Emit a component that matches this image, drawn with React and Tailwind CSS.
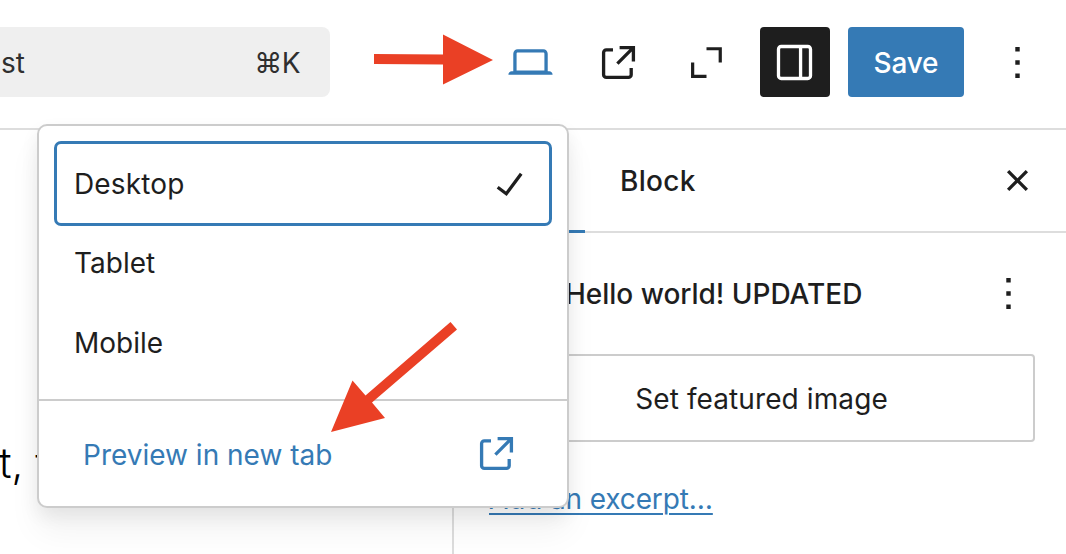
const Icon = ({ d, className = "" }) => (
  <svg viewBox="0 0 24 24" className={`w-[53px] h-[53px] shrink-0 ${className}`} fill="currentColor" fillRule="evenodd">
    <path d={d} />
  </svg>
);

const DESKTOP = "M20.5 16h-.7V8c0-1.1-.9-2-2-2H6.2c-1.1 0-2 .9-2 2v8h-.7c-.8 0-1.5.7-1.5 1.5h20c0-.8-.7-1.5-1.5-1.5zM5.7 8c0-.3.2-.5.5-.5h11.6c.3 0 .5.2.5.5v7.6H5.7V8z";
const EXTERNAL = "M19.5 4.5h-7V6h4.44l-5.97 5.97 1.06 1.06L18 7.06v4.44h1.5v-7Zm-13 1a2 2 0 0 0-2 2v10a2 2 0 0 0 2 2h10a2 2 0 0 0 2-2v-3H17v3a.5.5 0 0 1-.5.5h-10a.5.5 0 0 1-.5-.5v-10a.5.5 0 0 1 .5-.5h3V5.5h-3Z";
const EXPAND = "M12 5.1H18.95V12H17.5V6.5H12ZM5 12H6.45V17.6H12V19H5Z";
const DRAWER = "M18 4H6c-1.1 0-2 .9-2 2v12c0 1.1.9 2 2 2h12c1.1 0 2-.9 2-2V6c0-1.1-.9-2-2-2zm-4 14.5H6c-.3 0-.5-.2-.5-.5V6c0-.3.2-.5.5-.5h8v13zm4.5-.5c0 .3-.2.5-.5.5h-2.5v-13H18c.3 0 .5.2.5.5v12z";
const MORE = "M13 19h-2v-2h2v2zm0-6h-2v-2h2v2zm0-6h-2V5h2v2z";
const CHECK = "M16.7 7.1l-6.3 8.5-3.3-2.5-.9 1.2 4.5 3.4L17.9 8z";
const CLOSE = "M12 13.06l3.712 3.713 1.061-1.06L13.061 12l3.712-3.712-1.06-1.06L12 10.938 8.288 7.227l-1.061 1.06L10.939 12l-3.712 3.712 1.06 1.061L12 13.061z";

function Toolbar() {
  return (
    <header className="flex h-[130px] shrink-0 items-start border-b-2 border-[#dddddd] pt-[27px]">
      <div className="flex h-[70px] w-[330px] items-center justify-between rounded-r-lg bg-[#efefef] pt-[2px] pr-[30px] pl-[1px] text-[#2f2f2f]">
        <span>st</span>
        <span className="tracking-[-0.5px]">⌘K</span>
      </div>
      <div className="ml-[174px] flex h-[70px] items-center">
        <Icon d={DESKTOP} className="text-[#357ab5]" />
        <Icon d={EXTERNAL} className="ml-[35px]" />
        <Icon d={EXPAND} className="ml-[35px]" />
      </div>
      <button className="ml-[27px] flex h-[70px] w-[70px] items-center justify-center rounded-[4px] bg-[#1e1e1e] pr-[2px] text-white">
        <Icon d={DRAWER} />
      </button>
      <button className="ml-[18px] h-[70px] w-[116px] rounded-[4px] bg-[#357ab5] pt-[2px] font-medium tracking-[-0.2px] text-white">Save</button>
      <div className="ml-[27px] flex h-[70px] items-center">
        <Icon d={MORE} />
      </div>
    </header>
  );
}

function Sidebar() {
  return (
    <aside className="flex w-[614px] shrink-0 flex-col border-l-2 border-[#dddddd]">
      <div className="flex h-[103px] shrink-0 items-stretch border-b-2 border-[#dddddd] font-medium">
        <div className="-mb-[2px] w-[131px] border-b-[3px] border-[#357ab5]" />
        <div className="flex flex-1 items-center pl-[35px] tracking-[0.3px]">Block</div>
        <div className="mr-[22px] flex items-center">
          <Icon d={CLOSE} />
        </div>
      </div>
      <div className="mt-[34px] flex h-[53px] items-center justify-between pr-[31px] pl-[111px] font-medium">
        <span className="tracking-[-0.02px]">Hello world! UPDATED</span>
        <Icon d={MORE} />
      </div>
      <button className="mt-[34px] mr-[31px] ml-[34px] h-[88px] shrink-0 rounded-[4px] border-2 border-[#cccccc] pt-[2px] tracking-[0.1px]">
        Set featured image
      </button>
      <div className="mt-[39px] ml-[35px]">
        <a className="tracking-[-0.13px] text-[#357ab5] underline decoration-2 underline-offset-[4px]">Add an excerpt…</a>
      </div>
    </aside>
  );
}

function PreviewMenu() {
  return (
    <div className="absolute top-[124px] left-[37px] flex h-[384px] w-[532px] flex-col rounded-[10px] border-2 border-[#cccccc] bg-white shadow-[0_8px_18px_rgba(0,0,0,0.07),0_24px_32px_rgba(0,0,0,0.05)]">
      <div className="flex flex-col px-[15px] pt-[15px]">
        <div className="flex h-[85px] items-center justify-between rounded-[7px] border-[3px] border-[#357ab5] pr-[13px] pl-[17px]">
          <span className="tracking-[0.15px]">Desktop</span>
          <Icon d={CHECK} />
        </div>
        <div className="flex h-[73px] items-center pl-[20px]">Tablet</div>
        <div className="flex h-[87px] items-center pl-[20px]">Mobile</div>
      </div>
      <div className="mt-[13px] flex flex-1 items-center justify-between border-t-2 border-[#cccccc] pr-[44px] pl-[44px] text-[#357ab5]">
        <span className="pt-[2px]">Preview in new tab</span>
        <Icon d={EXTERNAL} />
      </div>
    </div>
  );
}

export default function App() {
  return (
    <div className="relative flex h-[554px] w-[1066px] flex-col overflow-hidden bg-white font-['Inter','DejaVu_Sans',sans-serif] text-[28px] leading-[36px] whitespace-nowrap text-[#1e1e1e]">
      <Toolbar />
      <div className="flex min-h-0 flex-1">
        <main className="w-[452px] shrink-0 pt-[307px] text-[42px] leading-[52px] font-light text-black">
          <span className="-ml-[1px]">t, t</span>
        </main>
        <Sidebar />
      </div>
      <PreviewMenu />
      <svg className="pointer-events-none absolute inset-0" width="1066" height="554" fill="#ea4025">
        <path d="M374 54L443 54.5V34.5L493 60L443 84.500V64.500L374 64Z" />
        <path d="M450.500 322L457 329.500L372 402.500L385 418L331 432L352.500 380.500L365.500 395.500Z" />
      </svg>
    </div>
  );
}
